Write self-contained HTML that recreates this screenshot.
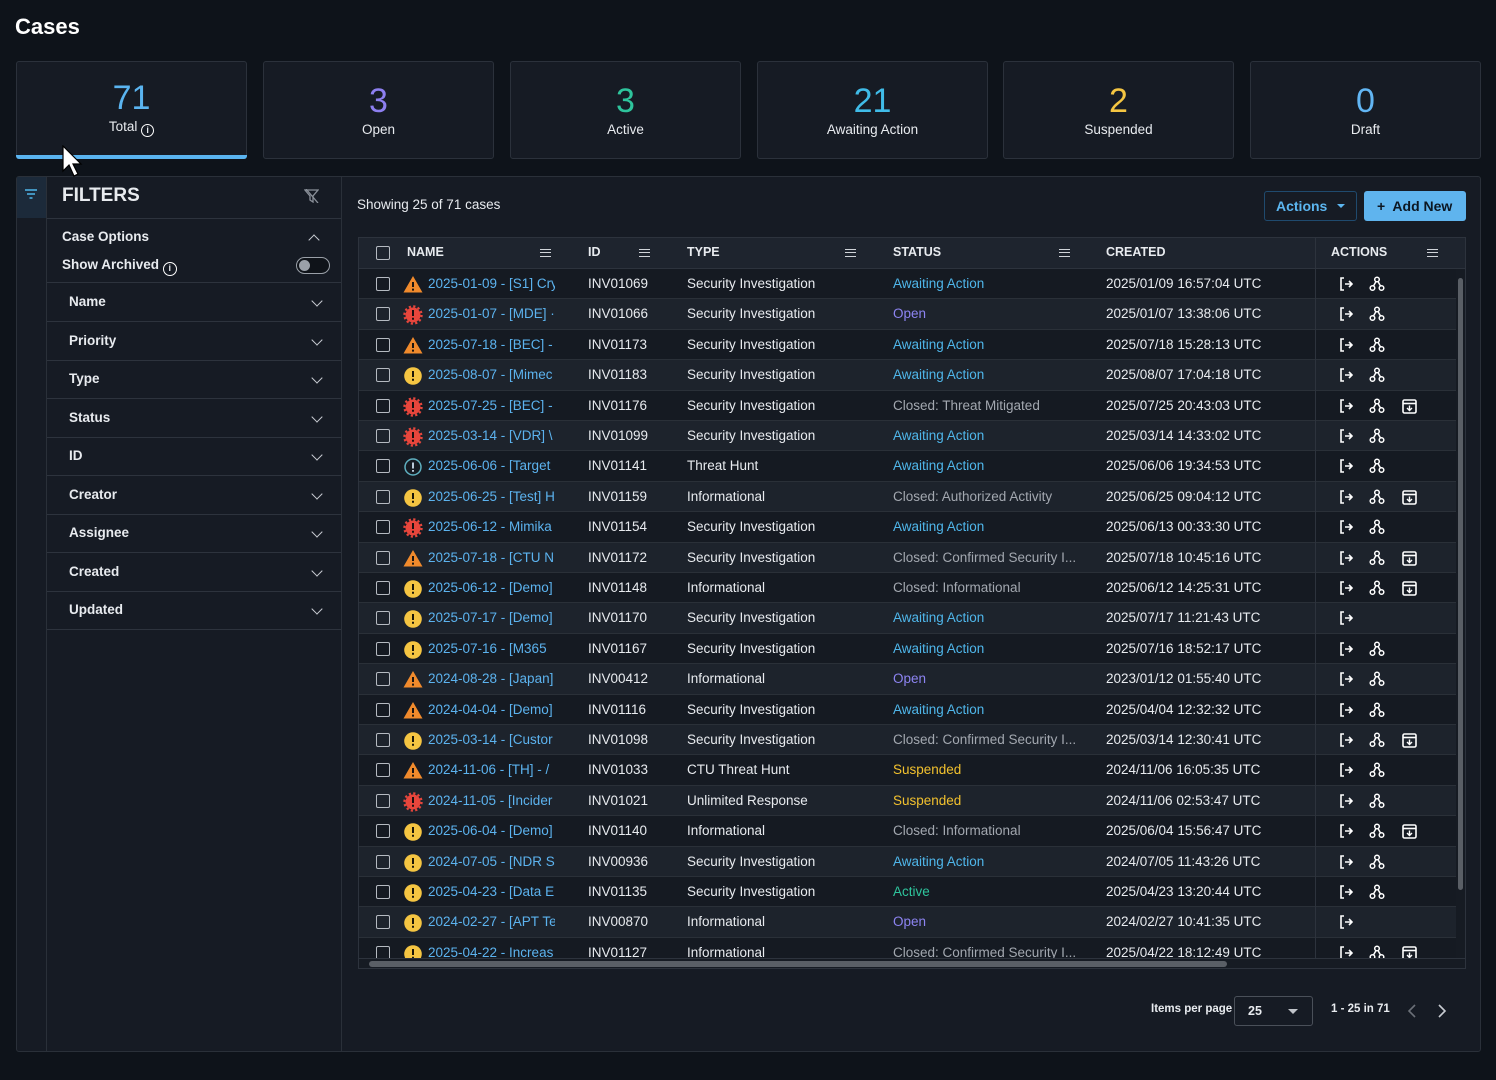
<!DOCTYPE html>
<html><head><meta charset="utf-8"><style>
*{box-sizing:border-box;margin:0;padding:0}
body{width:1496px;height:1080px;background:#0e131a;font-family:"Liberation Sans",sans-serif;color:#e8ebef;position:relative;overflow:hidden;font-size:13px}
.abs{position:absolute}
h1{position:absolute;left:15px;top:14px;font-size:22px;font-weight:bold;color:#fff}
.card{position:absolute;top:61px;width:231px;height:98px;background:#161b24;border:1px solid #2b313b;border-radius:3px;text-align:center}
.card .n{font-size:34px;margin-top:16px;line-height:40px}
.card .l{font-size:13.5px;color:#e8ebef;margin-top:1px}
.panel{position:absolute;left:16px;top:176px;width:1465px;height:876px;background:#161b24;border:1px solid #2a3039;border-radius:3px}
.fl{position:absolute;left:47px;width:294px;border-bottom:1px solid #2d333d;height:39px;line-height:38px;padding-left:22px;font-size:13.5px;font-weight:bold}
.chev{position:absolute;right:20px;top:14px;width:8px;height:8px;border-right:1.6px solid #c8ccd2;border-bottom:1.6px solid #c8ccd2;transform:rotate(45deg)}
.tbl{position:absolute;left:358px;top:237px;width:1108px;height:732px;border:1px solid #2d333d;background:#161b23;overflow:hidden}
.hd{position:absolute;left:0;top:0;width:1108px;height:31px;background:#1e242e;border-bottom:1px solid #2d333d;font-weight:bold;font-size:12.5px}
.hd span{position:absolute;top:7px}
.hm{position:absolute;top:11px;width:11px;height:8px;border-top:1.5px solid #d0d4d9;border-bottom:1.5px solid #d0d4d9}
.hm:after{content:"";position:absolute;left:0;right:0;top:2.2px;border-top:1.5px solid #d0d4d9}
.row{position:absolute;left:0;width:1097px;height:30.4px;border-bottom:1px solid #2a3038;font-size:13.5px}
.row.a{background:#151a22}.row.b{background:#1d232c}
.row>*{position:absolute;top:7px;white-space:nowrap}
.cb{width:14px;height:14px;border:1.6px solid #b5bac1;border-radius:2px;top:8px!important;left:17px}
.nm{left:69px;width:127px;overflow:hidden;color:#5cb3ef}
.id{left:229px}.ty{left:328px}.st{left:534px}.cr{left:747px}
.aw{color:#4fb6ea}.op{color:#8d84f2}.cl{color:#a3a8b0}.su{color:#f2c12e}.ac{color:#2ec49c}
.ic{left:44px;top:6px!important}
.act{left:956px;width:1px;height:31px;background:#2d333d;top:0!important}
.ex{left:980px;top:8px!important}.gr{left:1010px;top:7px!important}.ar{left:1043px;top:8px!important}
</style></head><body>
<svg width="0" height="0" style="position:absolute">
<defs>
<g id="tri"><path d="M10 1L19.5 17.5H0.5Z" fill="#f08a2c"/><path d="M10 7v5M10 13.6v2" stroke="#1a1410" stroke-width="2"/></g>
<g id="red"><circle cx="10" cy="10" r="7.5" fill="#e8463c"/><circle cx="10" cy="10" r="8.6" fill="none" stroke="#e8463c" stroke-width="2.2" stroke-dasharray="2.2 2.3"/><path d="M10 5v6M10 12.8v2" stroke="#1a1010" stroke-width="2"/></g>
<g id="yel"><circle cx="10" cy="10" r="8.8" fill="#f5c542"/><path d="M10 5v6M10 12.8v2" stroke="#1a1608" stroke-width="2"/></g>
<g id="inf"><circle cx="10" cy="10" r="8" fill="none" stroke="#5fb0c0" stroke-width="1.5"/><path d="M10 5.5v6M10 13v1.8" stroke="#cde" stroke-width="1.8"/></g>
<g id="ex"><path d="M5 1H2v12h3M6 7h7M10 4l3 3-3 3" fill="none" stroke="#fff" stroke-width="1.6"/></g>
<g id="gr" fill="none" stroke="#fff" stroke-width="1.5"><circle cx="8" cy="3.5" r="2.3"/><circle cx="3.5" cy="12" r="2.3"/><circle cx="12.5" cy="12" r="2.3"/><path d="M7 5.5L4.5 10M9 5.5l2.5 4.5"/></g>
<g id="ar"><rect x="1" y="1" width="13" height="13" rx="1.5" fill="none" stroke="#fff" stroke-width="1.6"/><path d="M1 4.5h13" stroke="#fff" stroke-width="1.6"/><path d="M7.5 6.5v5M5 9l2.5 2.5L10 9" fill="none" stroke="#fff" stroke-width="1.4"/></g>
</defs></svg>
<h1>Cases</h1>
<div class="card" style="left:16px"><div class="n" style="color:#5ab4f0">71</div><div class="l">Total <span style="display:inline-block;width:13px;height:13px;border:1.4px solid #fff;border-radius:50%;font-size:9px;line-height:11px;vertical-align:-2px;font-weight:bold">i</span></div><div class="abs" style="left:-1px;right:-1px;bottom:-1px;height:4px;background:#5ab4f0;border-radius:0 0 3px 3px"></div></div>
<div class="card" style="left:263px"><div class="n" style="color:#8d7ff0;margin-top:19px">3</div><div class="l">Open</div></div>
<div class="card" style="left:510px"><div class="n" style="color:#2ec49c;margin-top:19px">3</div><div class="l">Active</div></div>
<div class="card" style="left:757px"><div class="n" style="color:#40bce8;margin-top:19px">21</div><div class="l">Awaiting Action</div></div>
<div class="card" style="left:1003px"><div class="n" style="color:#f4c542;margin-top:19px">2</div><div class="l">Suspended</div></div>
<div class="card" style="left:1250px"><div class="n" style="color:#62b6f4;margin-top:19px">0</div><div class="l">Draft</div></div>

<div class="panel"></div>
<div class="abs" style="left:17px;top:177px;width:30px;height:41px;background:#1c2a3a"></div>
<div class="abs" style="left:46px;top:177px;width:1px;height:874px;background:#2a3039"></div>
<div class="abs" style="left:341px;top:177px;width:1px;height:874px;background:#2a3039"></div>
<svg class="abs" style="left:25px;top:189px" width="12" height="10"><path d="M0 1h12M2 5h8M4.5 9h3" stroke="#4fb6ea" stroke-width="1.6"/></svg>
<div class="abs" style="left:62px;top:185px;font-size:19px;font-weight:bold">FILTERS</div>
<svg class="abs" style="left:304px;top:189px" width="15" height="14"><path d="M1 1h13l-5 6v6l-3-2V7z" fill="none" stroke="#8a9099" stroke-width="1.3"/><path d="M2 0l12 14" stroke="#8a9099" stroke-width="1.3"/></svg>
<div class="abs" style="left:47px;top:218px;width:294px;height:1px;background:#2d333d"></div>
<div class="abs" style="left:62px;top:229px;font-size:13.5px;font-weight:bold">Case Options</div>
<div class="chev" style="left:310px;top:236px;transform:rotate(225deg)"></div>
<div class="abs" style="left:62px;top:257px;font-size:13.5px;font-weight:bold">Show Archived <span style="display:inline-block;width:14px;height:14px;border:1.5px solid #fff;border-radius:50%;font-size:9px;line-height:11px;text-align:center;vertical-align:-2px">i</span></div>
<div class="abs" style="left:296px;top:257px;width:34px;height:17px;border:1.3px solid #9aa0a8;border-radius:9px;background:#0f1319"><div class="abs" style="left:2px;top:2px;width:11px;height:11px;border-radius:50%;background:#9aa0a8"></div></div>
<div class="abs" style="left:47px;top:282px;width:294px;height:1px;background:#2d333d"></div>
<div class="fl" style="top:283px">Name<div class="chev"></div></div>
<div class="fl" style="top:322px">Priority<div class="chev"></div></div>
<div class="fl" style="top:360px">Type<div class="chev"></div></div>
<div class="fl" style="top:399px">Status<div class="chev"></div></div>
<div class="fl" style="top:437px">ID<div class="chev"></div></div>
<div class="fl" style="top:476px">Creator<div class="chev"></div></div>
<div class="fl" style="top:514px">Assignee<div class="chev"></div></div>
<div class="fl" style="top:553px">Created<div class="chev"></div></div>
<div class="fl" style="top:591px">Updated<div class="chev"></div></div>

<div class="abs" style="left:357px;top:197px;font-size:13.5px">Showing 25 of 71 cases</div>
<div class="abs" style="left:1264px;top:191px;width:93px;height:30px;border:1px solid #1f4a6e;border-radius:3px;color:#5cb6f0;font-size:14px;font-weight:bold;line-height:28px;padding-left:11px">Actions <span style="display:inline-block;margin-left:6px;border:4px solid transparent;border-top:4px solid #5cb6f0;vertical-align:-1px"></span></div>
<div class="abs" style="left:1364px;top:191px;width:102px;height:30px;background:#5fb4ee;border-radius:3px;color:#0c1722;font-size:14px;font-weight:bold;line-height:30px;padding-left:13px">+&nbsp; Add New</div>

<div class="tbl">
<div class="hd">
<div class="cb" style="top:8px;position:absolute"></div>
<span style="left:48px">NAME</span><div class="hm" style="left:181px"></div>
<span style="left:229px">ID</span><div class="hm" style="left:280px"></div>
<span style="left:328px">TYPE</span><div class="hm" style="left:486px"></div>
<span style="left:534px">STATUS</span><div class="hm" style="left:700px"></div>
<span style="left:747px">CREATED</span>
<div class="abs" style="left:956px;top:0;width:1px;height:31px;background:#2d333d"></div>
<span style="left:972px">ACTIONS</span><div class="hm" style="left:1068px"></div>
</div>
<div class="abs" style="left:0;top:31px;width:1097px;height:690px;overflow:hidden">
<div class="row a" style="top:0px"><div class="cb"></div><svg class="ic" width="20" height="19"><use href="#tri"/></svg><div class="nm">2025-01-09 - [S1] Cryp</div><div class="id">INV01069</div><div class="ty">Security Investigation</div><div class="st aw">Awaiting Action</div><div class="cr">2025/01/09 16:57:04 UTC</div><div class="act"></div><svg class="ex" width="14" height="14"><use href="#ex"/></svg><svg class="gr" width="16" height="16"><use href="#gr"/></svg></div>
<div class="row b" style="top:30.4px"><div class="cb"></div><svg class="ic" width="20" height="20"><use href="#red"/></svg><div class="nm">2025-01-07 - [MDE] ·</div><div class="id">INV01066</div><div class="ty">Security Investigation</div><div class="st op">Open</div><div class="cr">2025/01/07 13:38:06 UTC</div><div class="act"></div><svg class="ex" width="14" height="14"><use href="#ex"/></svg><svg class="gr" width="16" height="16"><use href="#gr"/></svg></div>
<div class="row a" style="top:60.8px"><div class="cb"></div><svg class="ic" width="20" height="19"><use href="#tri"/></svg><div class="nm">2025-07-18 - [BEC] -</div><div class="id">INV01173</div><div class="ty">Security Investigation</div><div class="st aw">Awaiting Action</div><div class="cr">2025/07/18 15:28:13 UTC</div><div class="act"></div><svg class="ex" width="14" height="14"><use href="#ex"/></svg><svg class="gr" width="16" height="16"><use href="#gr"/></svg></div>
<div class="row b" style="top:91.2px"><div class="cb"></div><svg class="ic" width="20" height="20"><use href="#yel"/></svg><div class="nm">2025-08-07 - [Mimec</div><div class="id">INV01183</div><div class="ty">Security Investigation</div><div class="st aw">Awaiting Action</div><div class="cr">2025/08/07 17:04:18 UTC</div><div class="act"></div><svg class="ex" width="14" height="14"><use href="#ex"/></svg><svg class="gr" width="16" height="16"><use href="#gr"/></svg></div>
<div class="row a" style="top:121.6px"><div class="cb"></div><svg class="ic" width="20" height="20"><use href="#red"/></svg><div class="nm">2025-07-25 - [BEC] -</div><div class="id">INV01176</div><div class="ty">Security Investigation</div><div class="st cl">Closed: Threat Mitigated</div><div class="cr">2025/07/25 20:43:03 UTC</div><div class="act"></div><svg class="ex" width="14" height="14"><use href="#ex"/></svg><svg class="gr" width="16" height="16"><use href="#gr"/></svg><svg class="ar" width="15" height="15"><use href="#ar"/></svg></div>
<div class="row b" style="top:152px"><div class="cb"></div><svg class="ic" width="20" height="20"><use href="#red"/></svg><div class="nm">2025-03-14 - [VDR] \</div><div class="id">INV01099</div><div class="ty">Security Investigation</div><div class="st aw">Awaiting Action</div><div class="cr">2025/03/14 14:33:02 UTC</div><div class="act"></div><svg class="ex" width="14" height="14"><use href="#ex"/></svg><svg class="gr" width="16" height="16"><use href="#gr"/></svg></div>
<div class="row a" style="top:182.4px"><div class="cb"></div><svg class="ic" width="20" height="20"><use href="#inf"/></svg><div class="nm">2025-06-06 - [Target</div><div class="id">INV01141</div><div class="ty">Threat Hunt</div><div class="st aw">Awaiting Action</div><div class="cr">2025/06/06 19:34:53 UTC</div><div class="act"></div><svg class="ex" width="14" height="14"><use href="#ex"/></svg><svg class="gr" width="16" height="16"><use href="#gr"/></svg></div>
<div class="row b" style="top:212.8px"><div class="cb"></div><svg class="ic" width="20" height="20"><use href="#yel"/></svg><div class="nm">2025-06-25 - [Test] H</div><div class="id">INV01159</div><div class="ty">Informational</div><div class="st cl">Closed: Authorized Activity</div><div class="cr">2025/06/25 09:04:12 UTC</div><div class="act"></div><svg class="ex" width="14" height="14"><use href="#ex"/></svg><svg class="gr" width="16" height="16"><use href="#gr"/></svg><svg class="ar" width="15" height="15"><use href="#ar"/></svg></div>
<div class="row a" style="top:243.2px"><div class="cb"></div><svg class="ic" width="20" height="20"><use href="#red"/></svg><div class="nm">2025-06-12 - Mimika</div><div class="id">INV01154</div><div class="ty">Security Investigation</div><div class="st aw">Awaiting Action</div><div class="cr">2025/06/13 00:33:30 UTC</div><div class="act"></div><svg class="ex" width="14" height="14"><use href="#ex"/></svg><svg class="gr" width="16" height="16"><use href="#gr"/></svg></div>
<div class="row b" style="top:273.6px"><div class="cb"></div><svg class="ic" width="20" height="19"><use href="#tri"/></svg><div class="nm">2025-07-18 - [CTU N</div><div class="id">INV01172</div><div class="ty">Security Investigation</div><div class="st cl">Closed: Confirmed Security I...</div><div class="cr">2025/07/18 10:45:16 UTC</div><div class="act"></div><svg class="ex" width="14" height="14"><use href="#ex"/></svg><svg class="gr" width="16" height="16"><use href="#gr"/></svg><svg class="ar" width="15" height="15"><use href="#ar"/></svg></div>
<div class="row a" style="top:304px"><div class="cb"></div><svg class="ic" width="20" height="20"><use href="#yel"/></svg><div class="nm">2025-06-12 - [Demo]</div><div class="id">INV01148</div><div class="ty">Informational</div><div class="st cl">Closed: Informational</div><div class="cr">2025/06/12 14:25:31 UTC</div><div class="act"></div><svg class="ex" width="14" height="14"><use href="#ex"/></svg><svg class="gr" width="16" height="16"><use href="#gr"/></svg><svg class="ar" width="15" height="15"><use href="#ar"/></svg></div>
<div class="row b" style="top:334.4px"><div class="cb"></div><svg class="ic" width="20" height="20"><use href="#yel"/></svg><div class="nm">2025-07-17 - [Demo]</div><div class="id">INV01170</div><div class="ty">Security Investigation</div><div class="st aw">Awaiting Action</div><div class="cr">2025/07/17 11:21:43 UTC</div><div class="act"></div><svg class="ex" width="14" height="14"><use href="#ex"/></svg></div>
<div class="row a" style="top:364.8px"><div class="cb"></div><svg class="ic" width="20" height="20"><use href="#yel"/></svg><div class="nm">2025-07-16 - [M365</div><div class="id">INV01167</div><div class="ty">Security Investigation</div><div class="st aw">Awaiting Action</div><div class="cr">2025/07/16 18:52:17 UTC</div><div class="act"></div><svg class="ex" width="14" height="14"><use href="#ex"/></svg><svg class="gr" width="16" height="16"><use href="#gr"/></svg></div>
<div class="row b" style="top:395.2px"><div class="cb"></div><svg class="ic" width="20" height="19"><use href="#tri"/></svg><div class="nm">2024-08-28 - [Japan]</div><div class="id">INV00412</div><div class="ty">Informational</div><div class="st op">Open</div><div class="cr">2023/01/12 01:55:40 UTC</div><div class="act"></div><svg class="ex" width="14" height="14"><use href="#ex"/></svg><svg class="gr" width="16" height="16"><use href="#gr"/></svg></div>
<div class="row a" style="top:425.6px"><div class="cb"></div><svg class="ic" width="20" height="19"><use href="#tri"/></svg><div class="nm">2024-04-04 - [Demo]</div><div class="id">INV01116</div><div class="ty">Security Investigation</div><div class="st aw">Awaiting Action</div><div class="cr">2025/04/04 12:32:32 UTC</div><div class="act"></div><svg class="ex" width="14" height="14"><use href="#ex"/></svg><svg class="gr" width="16" height="16"><use href="#gr"/></svg></div>
<div class="row b" style="top:456px"><div class="cb"></div><svg class="ic" width="20" height="20"><use href="#yel"/></svg><div class="nm">2025-03-14 - [Custor</div><div class="id">INV01098</div><div class="ty">Security Investigation</div><div class="st cl">Closed: Confirmed Security I...</div><div class="cr">2025/03/14 12:30:41 UTC</div><div class="act"></div><svg class="ex" width="14" height="14"><use href="#ex"/></svg><svg class="gr" width="16" height="16"><use href="#gr"/></svg><svg class="ar" width="15" height="15"><use href="#ar"/></svg></div>
<div class="row a" style="top:486.4px"><div class="cb"></div><svg class="ic" width="20" height="19"><use href="#tri"/></svg><div class="nm">2024-11-06 - [TH] - /</div><div class="id">INV01033</div><div class="ty">CTU Threat Hunt</div><div class="st su">Suspended</div><div class="cr">2024/11/06 16:05:35 UTC</div><div class="act"></div><svg class="ex" width="14" height="14"><use href="#ex"/></svg><svg class="gr" width="16" height="16"><use href="#gr"/></svg></div>
<div class="row b" style="top:516.8px"><div class="cb"></div><svg class="ic" width="20" height="20"><use href="#red"/></svg><div class="nm">2024-11-05 - [Incider</div><div class="id">INV01021</div><div class="ty">Unlimited Response</div><div class="st su">Suspended</div><div class="cr">2024/11/06 02:53:47 UTC</div><div class="act"></div><svg class="ex" width="14" height="14"><use href="#ex"/></svg><svg class="gr" width="16" height="16"><use href="#gr"/></svg></div>
<div class="row a" style="top:547.2px"><div class="cb"></div><svg class="ic" width="20" height="20"><use href="#yel"/></svg><div class="nm">2025-06-04 - [Demo]</div><div class="id">INV01140</div><div class="ty">Informational</div><div class="st cl">Closed: Informational</div><div class="cr">2025/06/04 15:56:47 UTC</div><div class="act"></div><svg class="ex" width="14" height="14"><use href="#ex"/></svg><svg class="gr" width="16" height="16"><use href="#gr"/></svg><svg class="ar" width="15" height="15"><use href="#ar"/></svg></div>
<div class="row b" style="top:577.6px"><div class="cb"></div><svg class="ic" width="20" height="20"><use href="#yel"/></svg><div class="nm">2024-07-05 - [NDR S</div><div class="id">INV00936</div><div class="ty">Security Investigation</div><div class="st aw">Awaiting Action</div><div class="cr">2024/07/05 11:43:26 UTC</div><div class="act"></div><svg class="ex" width="14" height="14"><use href="#ex"/></svg><svg class="gr" width="16" height="16"><use href="#gr"/></svg></div>
<div class="row a" style="top:608px"><div class="cb"></div><svg class="ic" width="20" height="20"><use href="#yel"/></svg><div class="nm">2025-04-23 - [Data E</div><div class="id">INV01135</div><div class="ty">Security Investigation</div><div class="st ac">Active</div><div class="cr">2025/04/23 13:20:44 UTC</div><div class="act"></div><svg class="ex" width="14" height="14"><use href="#ex"/></svg><svg class="gr" width="16" height="16"><use href="#gr"/></svg></div>
<div class="row b" style="top:638.4px"><div class="cb"></div><svg class="ic" width="20" height="20"><use href="#yel"/></svg><div class="nm">2024-02-27 - [APT Te</div><div class="id">INV00870</div><div class="ty">Informational</div><div class="st op">Open</div><div class="cr">2024/02/27 10:41:35 UTC</div><div class="act"></div><svg class="ex" width="14" height="14"><use href="#ex"/></svg></div>
<div class="row a" style="top:668.8px"><div class="cb"></div><svg class="ic" width="20" height="20"><use href="#yel"/></svg><div class="nm">2025-04-22 - Increas</div><div class="id">INV01127</div><div class="ty">Informational</div><div class="st cl">Closed: Confirmed Security I...</div><div class="cr">2025/04/22 18:12:49 UTC</div><div class="act"></div><svg class="ex" width="14" height="14"><use href="#ex"/></svg><svg class="gr" width="16" height="16"><use href="#gr"/></svg><svg class="ar" width="15" height="15"><use href="#ar"/></svg></div>
</div>
<div class="abs" style="left:1099px;top:40px;width:5px;height:612px;background:#5a5f66;border-radius:3px"></div>
<div class="abs" style="left:0;top:720px;width:1108px;height:1px;background:#2d333d"></div>
<div class="abs" style="left:10px;top:723px;width:858px;height:6px;background:#5a5f66;border-radius:3px"></div>
</div>

<div class="abs" style="left:1151px;top:1003px;font-size:11.5px;font-weight:bold">Items per page</div>
<div class="abs" style="left:1234px;top:996px;width:79px;height:30px;border:1px solid #4a5059;border-radius:3px;font-size:12.5px;font-weight:bold;line-height:28px;padding-left:13px">25<span class="abs" style="right:14px;top:12px;border:5px solid transparent;border-top:5px solid #c0c4ca"></span></div>
<div class="abs" style="left:1331px;top:1003px;font-size:11.5px;font-weight:bold">1 - 25 in 71</div>
<svg class="abs" style="left:1407px;top:1004px" width="10" height="14"><path d="M8 1L2 7l6 6" fill="none" stroke="#6b7078" stroke-width="1.6"/></svg>
<svg class="abs" style="left:1437px;top:1004px" width="10" height="14"><path d="M2 1l6 6-6 6" fill="none" stroke="#c8ccd2" stroke-width="1.6"/></svg>
<svg class="abs" style="left:62px;top:145px" width="24" height="36" viewBox="0 0 24 36"><path d="M1 1 L1 26 L7 20 L12 31 L16 29 L11 19 L19 19 Z" fill="#fff" stroke="#000" stroke-width="1.2"/></svg>
</body></html>
